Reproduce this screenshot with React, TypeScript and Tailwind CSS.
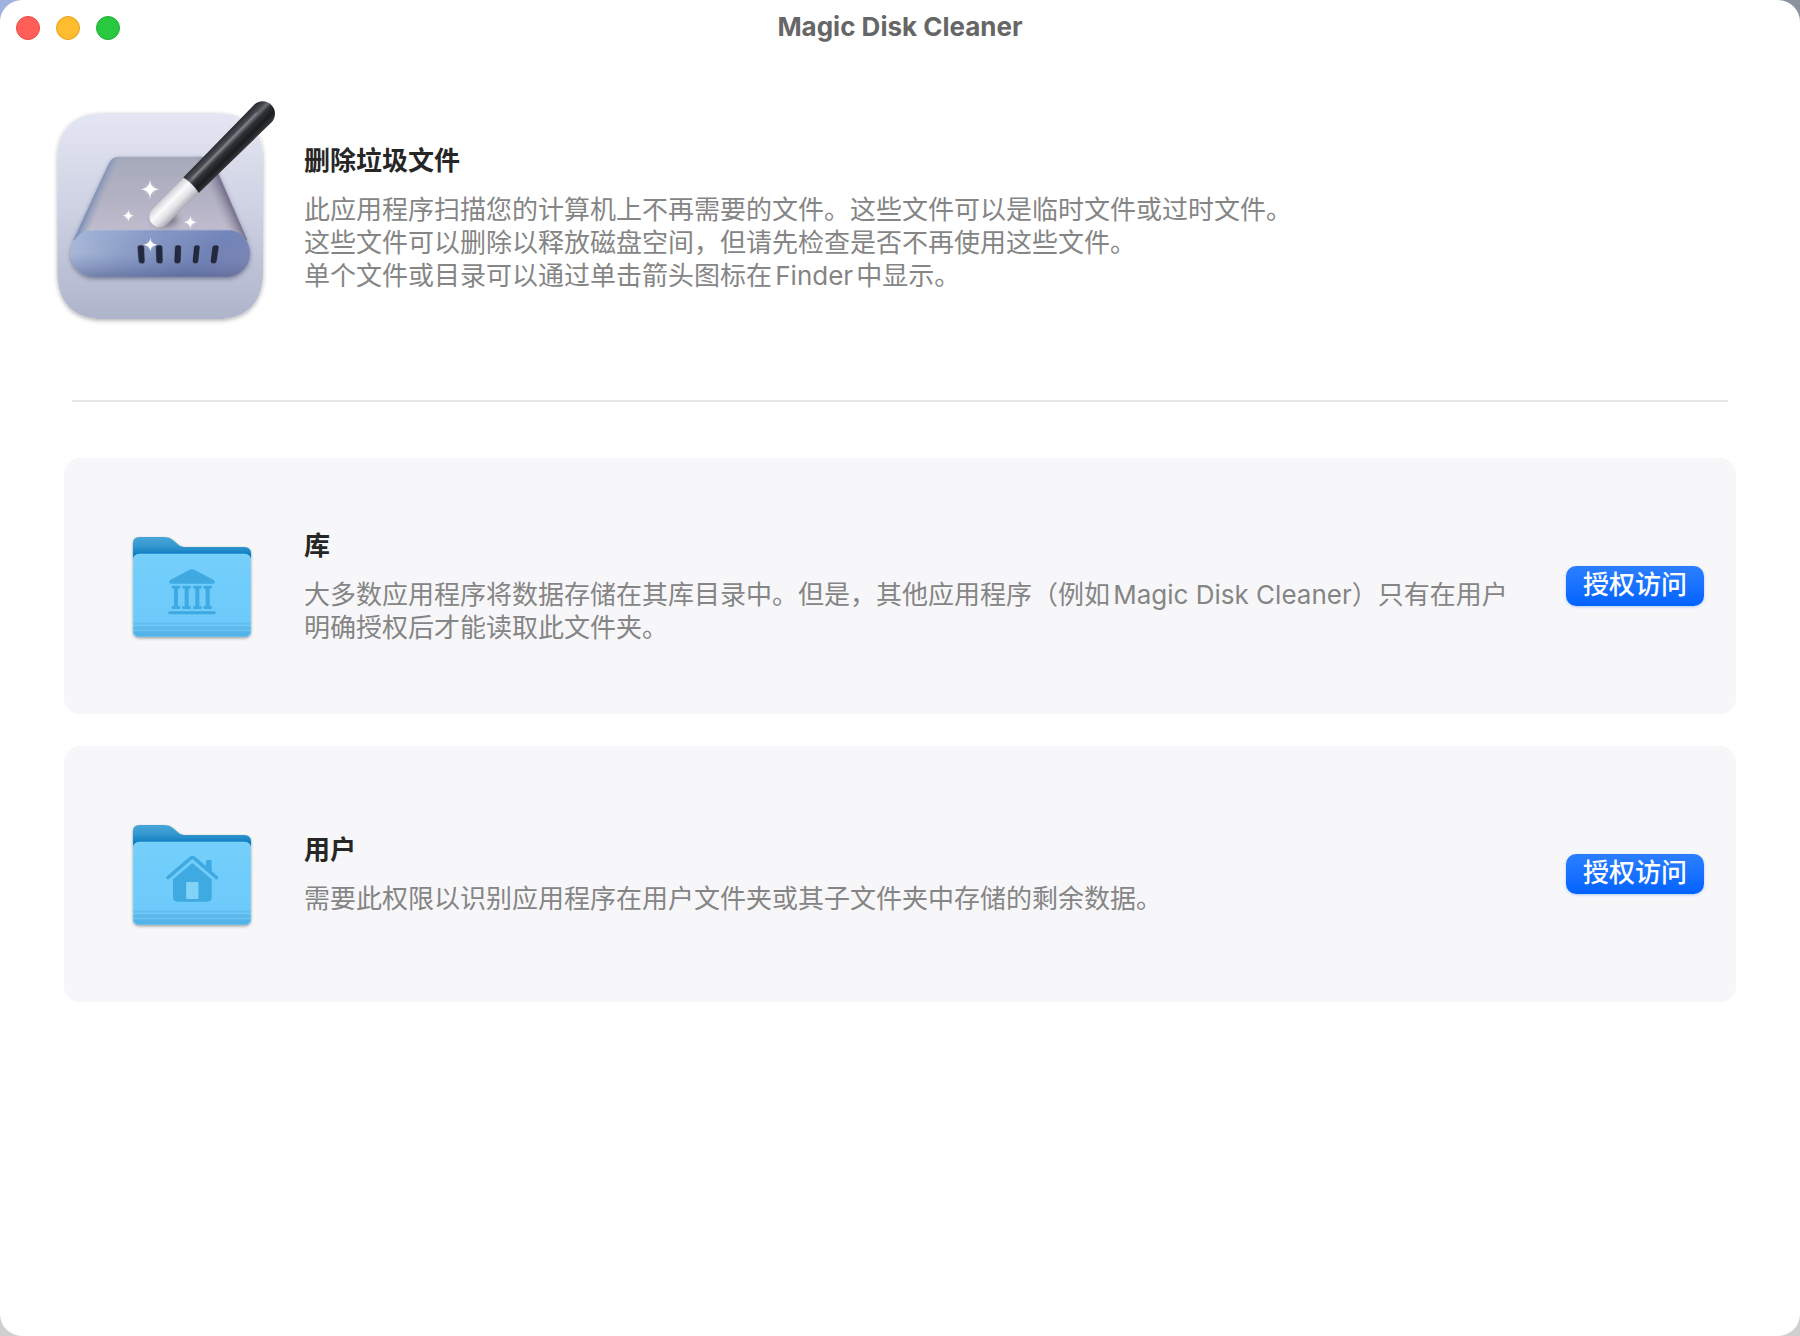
import type { ReactNode } from "react";

const SPARKLE =
  "M0 -30C2 -10 6 -4 28 0C6 4 2 10 0 30C-2 10 -6 4 -28 0C-6 -4 -2 -10 0 -30Z";

function AppIcon() {
  const sparkles = [
    { x: 330, y: 328, s: 1 },
    { x: 265, y: 407, s: 0.65 },
    { x: 451, y: 427, s: 0.7 },
    { x: 331, y: 494, s: 0.75 },
  ];
  const slots = [
    "M292 503Q292 495 300 495H306Q313 495 313 503L315 542Q315 551 308 551H304Q296 551 295 542Z",
    "M347 503Q347 495 355 495H361Q368 495 368 503L369 542Q369 551 362 551H357Q349 551 348 542Z",
    "M404 503Q404 495 412 495H417Q424 495 424 503L423 542Q422 551 415 551H410Q402 551 402 542Z",
    "M461 503Q461 495 469 495H474Q481 495 480 503L476 542Q475 551 468 551H464Q456 551 457 542Z",
    "M516 503Q517 495 525 495H531Q538 495 537 503L531 542Q530 551 523 551H518Q510 551 511 542Z",
  ];
  return (
    <svg viewBox="0 24 780 780" className="w-[260px] shrink-0" role="img" aria-label="Magic Disk Cleaner">
      <defs>
        <linearGradient id="tile" x1="0" y1="0" x2="0" y2="1">
          <stop offset="0" stopColor="#e5e6f3" />
          <stop offset="0.5" stopColor="#ccd0e1" />
          <stop offset="1" stopColor="#adb4cb" />
        </linearGradient>
        <linearGradient id="lid" x1="0" y1="0" x2="0" y2="1">
          <stop offset="0" stopColor="#a5aabb" />
          <stop offset="0.5" stopColor="#b3b2c4" />
          <stop offset="1" stopColor="#c2bfd0" />
        </linearGradient>
        <linearGradient id="leftEdge" gradientUnits="userSpaceOnUse" x1="150" y1="335" x2="192" y2="353">
          <stop offset="0" stopColor="#93a9cc" />
          <stop offset="0.35" stopColor="#7e90b6" />
          <stop offset="1" stopColor="#9aa3bb" stopOpacity="0" />
        </linearGradient>
        <linearGradient id="rightEdge" gradientUnits="userSpaceOnUse" x1="575" y1="335" x2="520" y2="360">
          <stop offset="0" stopColor="#aaa4b8" />
          <stop offset="0.3" stopColor="#77728c" />
          <stop offset="1" stopColor="#9c9aae" stopOpacity="0" />
        </linearGradient>
        <linearGradient id="front" x1="0" y1="0.3" x2="1" y2="0.6">
          <stop offset="0" stopColor="#adbddb" />
          <stop offset="0.35" stopColor="#8c9dc6" />
          <stop offset="0.75" stopColor="#7183b6" />
          <stop offset="1" stopColor="#7b86b5" />
        </linearGradient>
        <linearGradient id="frontShade" x1="0" y1="0" x2="0" y2="1">
          <stop offset="0" stopColor="#7890cc" stopOpacity="0.25" />
          <stop offset="0.5" stopColor="#6a7cb0" stopOpacity="0" />
          <stop offset="1" stopColor="#454f7c" stopOpacity="0.4" />
        </linearGradient>
        <linearGradient id="wandBlack" x1="0" y1="0" x2="0" y2="1">
          <stop offset="0" stopColor="#26282c" />
          <stop offset="0.22" stopColor="#44474d" />
          <stop offset="0.36" stopColor="#6b6e75" />
          <stop offset="0.5" stopColor="#303236" />
          <stop offset="0.75" stopColor="#1b1c1f" />
          <stop offset="1" stopColor="#38393d" />
        </linearGradient>
        <linearGradient id="wandWhite" x1="0" y1="0" x2="0" y2="1">
          <stop offset="0" stopColor="#d2d2d6" />
          <stop offset="0.35" stopColor="#fbfbfc" />
          <stop offset="0.65" stopColor="#e4e4e8" />
          <stop offset="1" stopColor="#aaaab2" />
        </linearGradient>
        <filter id="tileShadow" x="-10%" y="-10%" width="120%" height="120%">
          <feDropShadow dx="0" dy="5" stdDeviation="6" floodColor="#000" floodOpacity="0.3" />
        </filter>
        <filter id="driveShadow" x="-10%" y="-10%" width="120%" height="125%">
          <feDropShadow dx="0" dy="6" stdDeviation="7" floodColor="#3b415f" floodOpacity="0.55" />
        </filter>
        <filter id="soft" x="-40%" y="-40%" width="180%" height="180%">
          <feGaussianBlur stdDeviation="9" />
        </filter>
        <filter id="glow" x="-40%" y="-40%" width="180%" height="180%">
          <feGaussianBlur stdDeviation="5" />
        </filter>
      </defs>
      <path
        d="M190 99H530C620 99 669 150 669 238V578C669 666 620 717 530 717H190C100 717 52 666 52 578V238C52 150 100 99 190 99Z"
        fill="url(#tile)"
        filter="url(#tileShadow)"
      />
      <g filter="url(#driveShadow)">
        <path d="M238 230H482Q512 230 524 254L622 480H100L205 254Q214 230 238 230Z" fill="url(#lid)" />
        <path d="M238 230H262L170 480H100L205 254Q214 230 238 230Z" fill="url(#leftEdge)" />
        <path d="M460 230H482Q512 230 524 254L622 480H552Z" fill="url(#rightEdge)" />
        <rect x="92" y="449" width="538" height="141" rx="70" fill="url(#front)" />
      </g>
      <rect x="92" y="449" width="538" height="141" rx="70" fill="url(#frontShade)" />
      <path d="M150 450H572" stroke="#c8cbe0" strokeWidth="2" opacity="0.7" />
      {slots.map((d) => (
        <path key={d} d={d} fill="#222a3f" stroke="#8c9ac4" strokeWidth="1.5" />
      ))}
      <ellipse cx="375" cy="418" rx="38" ry="24" fill="#5c5a6c" opacity="0.65" filter="url(#soft)" />
      <g transform="translate(359 410) rotate(-45)">
        <path d="M0 -31H136V32H0A31 31 0 0 1 0 -31Z" fill="url(#wandWhite)" />
        <path d="M133 -33L437 -37A37 37 0 0 1 437 37L133 33Q142 0 133 -33Z" fill="url(#wandBlack)" />
        <path d="M150 -12L424 -14" stroke="#9da0a6" strokeWidth="5" strokeLinecap="round" opacity="0.45" />
      </g>
      {sparkles.map(({ x, y, s }) => (
        <g key={`${x}-${y}`} transform={`translate(${x} ${y}) scale(${s})`}>
          <circle r="12" fill="#fff" opacity="0.7" filter="url(#glow)" />
          <path d={SPARKLE} fill="#fff" />
        </g>
      ))}
    </svg>
  );
}

function Folder({ id, children }: { id: string; children: ReactNode }) {
  return (
    <svg viewBox="0 3 450 390" className="w-[150px] shrink-0" aria-hidden="true">
      <defs>
        <linearGradient id={`${id}-back`} gradientUnits="userSpaceOnUse" x1="0" y1="50" x2="0" y2="115">
          <stop offset="0" stopColor="#48a6d8" />
          <stop offset="0.45" stopColor="#3497cf" />
          <stop offset="0.8" stopColor="#0f7fc4" />
          <stop offset="1" stopColor="#0a78be" />
        </linearGradient>
        <linearGradient id={`${id}-face`} x1="0" y1="0" x2="0" y2="1">
          <stop offset="0" stopColor="#74cffb" />
          <stop offset="1" stopColor="#6bc9fa" />
        </linearGradient>
        <filter id={`${id}-shadow`} x="-10%" y="-10%" width="120%" height="120%">
          <feDropShadow dx="0" dy="4" stdDeviation="4" floodColor="#000" floodOpacity="0.35" />
        </filter>
        <clipPath id={`${id}-clip`}>
          <rect x="39" y="101" width="354" height="250" rx="19" />
        </clipPath>
      </defs>
      <g filter={`url(#${id}-shadow)`}>
        <path
          d="M39 70Q39 51 58 51H136Q149 51 159 60L172 71Q183 81 198 81H373Q393 81 393 101V331Q393 351 373 351H59Q39 351 39 331Z"
          fill={`url(#${id}-back)`}
        />
      </g>
      <rect x="39" y="101" width="354" height="250" rx="19" fill={`url(#${id}-face)`} />
      <g clipPath={`url(#${id}-clip)`}>
        <rect x="39" y="308" width="354" height="6" fill="#62bdee" />
        <rect x="39" y="317" width="354" height="14" fill="#5bb9ec" />
        <rect x="39" y="331" width="354" height="20" fill="#55b3e8" />
        <path d="M39 316H393M39 332H393" stroke="#7fd0f7" strokeWidth="2" />
        <rect x="40" y="102" width="352" height="248" rx="18" fill="none" stroke="#9bdcfb" strokeWidth="2" opacity="0.6" />
      </g>
      {children}
    </svg>
  );
}

function LibraryFolder() {
  return (
    <Folder id="library">
      <g fill="#3fa9e2">
        <path d="M150 181L209 149Q216 146 223 149L282 181Q286 184 284 188Q283 191 279 191H153Q149 191 148 188Q146 184 150 181Z" />
        {[168, 200, 232, 263].map((x) => (
          <g key={x}>
            <rect x={x - 13} y="197" width="26" height="9" rx="4" />
            <rect x={x - 6} y="200" width="12" height="64" />
            <rect x={x - 13} y="258" width="26" height="9" rx="4" />
          </g>
        ))}
        <rect x="145" y="274" width="142" height="9" rx="4" />
      </g>
    </Folder>
  );
}

function HomeFolder() {
  return (
    <Folder id="home">
      <g fill="#3fa9e2">
        <path d="M141 205L209 146Q217 140 225 146L258 174V160Q258 156 262 156H270Q275 156 275 160V189L293 205Q296 209 294 212Q290 215 286 212L217 153L148 212Q144 215 140 212Q137 209 141 205Z" />
        <path
          fillRule="evenodd"
          d="M217 165L275 214V268Q275 281 262 281H172Q159 281 159 268V214ZM201 222Q199 222 199 225V273H235V225Q235 222 232 222Z"
        />
      </g>
      <rect x="199" y="222" width="36" height="51" rx="3" fill="#83d2f7" />
    </Folder>
  );
}

function PermissionCard({ icon, title, text }: { icon: ReactNode; title: string; text: string }) {
  return (
    <section className="flex min-h-64 items-center rounded-2xl bg-[#f7f7f9] pr-8 pl-14">
      {icon}
      <div className="ml-[34px] flex-1">
        <h2 className="mb-4 text-[26px] leading-[33px] font-bold text-[#262626]">{title}</h2>
        <p className="text-[26px] leading-[33px] text-[#858585]">{text}</p>
      </div>
      <button
        type="button"
        className="ml-12 h-10 shrink-0 rounded-[10px] bg-linear-to-b from-[#2b7fff] to-[#0062ff] px-[17px] pb-0.5 text-[26px] leading-[38px] font-medium text-white shadow-[0_1px_3px_rgba(0,98,255,0.3)]"
      >
        授权访问
      </button>
    </section>
  );
}

export default function App() {
  return (
    <div className="min-h-screen bg-[linear-gradient(to_bottom,transparent_50%,#cfcfcf_50%),linear-gradient(to_right,#a0b2de_50%,#8c929b_50%)] font-['Inter','Noto_Sans_CJK_SC',sans-serif] [text-autospace:normal]">
      <main className="min-h-screen rounded-[22px] bg-white" lang="zh-CN">
        <header className="grid h-14 grid-cols-[1fr_auto_1fr] items-center px-4">
          <div className="flex gap-4">
            <button type="button" aria-label="关闭" className="size-6 rounded-full border border-[#e24b41] bg-[#ff5f57]" />
            <button type="button" aria-label="最小化" className="size-6 rounded-full border border-[#e1a325] bg-[#febc2e]" />
            <button type="button" aria-label="缩放" className="size-6 rounded-full border border-[#1fad35] bg-[#28c840]" />
          </div>
          <h1 className="pb-1 text-[26px] leading-[33px] font-bold text-[#666666]">Magic Disk Cleaner</h1>
        </header>
        <section className="mt-8 flex items-center gap-1 px-10">
          <AppIcon />
          <div>
            <h2 className="mb-4 text-[26px] leading-[33px] font-bold text-[#262626]">删除垃圾文件</h2>
            <p className="text-[26px] leading-[33px] text-[#858585]">
              此应用程序扫描您的计算机上不再需要的文件。这些文件可以是临时文件或过时文件。
              <br />
              这些文件可以删除以释放磁盘空间，但请先检查是否不再使用这些文件。
              <br />
              单个文件或目录可以通过单击箭头图标在Finder中显示。
            </p>
          </div>
        </section>
        <hr className="mx-18 mt-13 border-t-2 border-[#e6e6e6]" />
        <div className="mx-16 mt-14 flex flex-col gap-8">
          <PermissionCard
            icon={<LibraryFolder />}
            title="库"
            text="大多数应用程序将数据存储在其库目录中。但是，其他应用程序（例如Magic Disk Cleaner）只有在用户明确授权后才能读取此文件夹。"
          />
          <PermissionCard
            icon={<HomeFolder />}
            title="用户"
            text="需要此权限以识别应用程序在用户文件夹或其子文件夹中存储的剩余数据。"
          />
        </div>
      </main>
    </div>
  );
}
